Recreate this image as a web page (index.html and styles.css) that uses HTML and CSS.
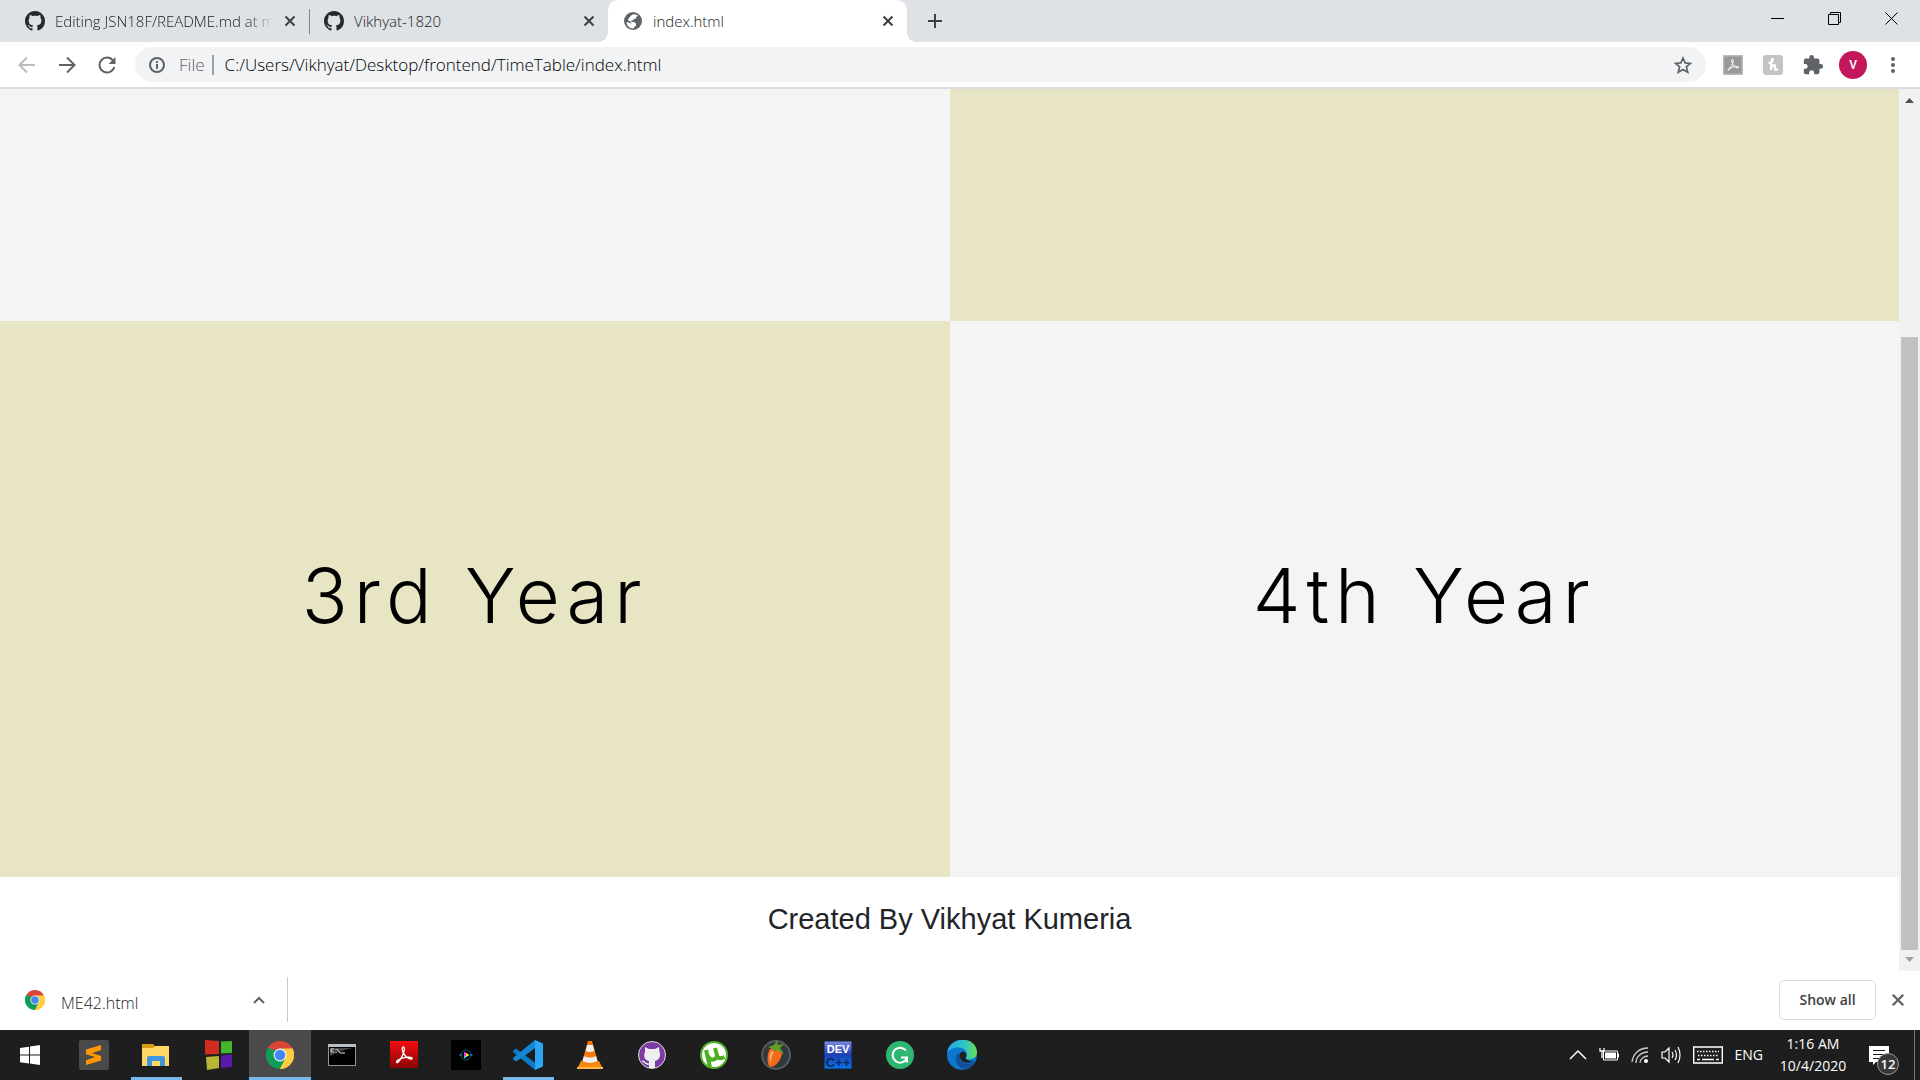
FILE: index.html
```html
<!DOCTYPE html>
<html lang="en">
<head>
<meta charset="utf-8">
<title>index.html</title>
<link rel="stylesheet" href="styles.css">
</head>
<body>
<svg class="defs" aria-hidden="true">
  <symbol id="cross" viewBox="0 0 12 12"><path d="M1.5 1.5l9 9M10.500 1.500l-9 9" fill="none" stroke="currentColor" stroke-width="2"/></symbol>
  <symbol id="octocat" viewBox="0 0 16 16"><path fill="currentColor" d="M8 0C3.580 0 0 3.580 0 8c0 3.540 2.290 6.530 5.470 7.590.4.070.55-.17.55-.38 0-.19-.01-.82-.01-1.490-2.010.37-2.530-.49-2.690-.94-.09-.23-.48-.94-.82-1.130-.28-.15-.68-.52-.01-.53.63-.01 1.080.58 1.230.82.72 1.210 1.870.87 2.330.66.07-.52.28-.87.51-1.070-1.780-.2-3.640-.89-3.640-3.950 0-.87.31-1.590.82-2.150-.08-.2-.36-1.020.08-2.120 0 0 .67-.21 2.200.82.64-.18 1.320-.27 2-.27s1.360.09 2 .27c1.530-1.040 2.200-.82 2.200-.82.44 1.100.16 1.920.08 2.120.51.56.82 1.270.82 2.150 0 3.070-1.870 3.750-3.650 3.950.29.25.54.73.54 1.480 0 1.070-.01 1.930-.01 2.200 0 .21.15.46.55.38A8.010 8.010 0 0 0 16 8c0-4.420-3.580-8-8-8z"/></symbol>
  <symbol id="chrome" viewBox="0 0 48 48">
    <path fill="#db4437" d="M24 24L3.200 12A24 24 0 0 1 44.800 12z"/>
    <path fill="#0f9d58" d="M24 24L24 48A24 24 0 0 1 3.200 12z"/>
    <path fill="#ffcd40" d="M24 24L44.800 12A24 24 0 0 1 24 48z"/>
    <path fill="#db4437" d="M24 13H45.300L44.800 12 24 10z"/>
    <path fill="#0f9d58" d="M14.500 29.500L3.200 12 16 16zM14.500 29.500L24 35 33.500 29.500 24 48z"/>
    <path fill="#ffcd40" d="M24 13H45.300A24 24 0 0 1 24 48L33.500 29.500z"/>
    <circle cx="24" cy="24" r="11" fill="#f1f1f1"/><circle cx="24" cy="24" r="9" fill="#4285f4"/>
  </symbol>
  <symbol id="acrobat" viewBox="0 0 28 28"><path fill="none" stroke="#fff" stroke-width="1.400" d="M12.500 6.500c-1 2 .8 6.500 3.500 9 2.500 2.300 6 3.500 6.200 2 .2-1.600-5-1.700-9-.6-4 1-7 3-6.500 4.400.6 1.400 3.500-1.800 5.400-6 1.700-3.800 2.700-8.300 1.700-9.100-.5-.3-1 0-1.300.3z"/></symbol>
</svg>

<header class="tabs">
  <div class="tab"><svg class="i20 dark"><use href="#octocat"/></svg><span class="tab-title fade">Editing JSN18F/README.md at m</span><button class="tab-close" aria-label="Close tab"><svg class="i12"><use href="#cross"/></svg></button></div>
  <div class="tab divided"><svg class="i20 dark"><use href="#octocat"/></svg><span class="tab-title">Vikhyat-1820</span><button class="tab-close" aria-label="Close tab"><svg class="i12"><use href="#cross"/></svg></button></div>
  <div class="tab active"><svg class="i20" viewBox="0 0 20 20"><circle cx="10" cy="10" r="9" fill="#5f6368"/><path fill="#fff" d="M10 3.500c2.500-.5 4 .5 5 1.500l-1.500.5-.5 2-2 .5-1 1.500H8L8.500 11h2.500l2 1.500v2L10 17.500c-3.500 0-6.500-3-6.500-6.500L7 12l1.500 1-1-2.500L5 9.500C5.500 7 8 4 10 3.500z"/></svg><span class="tab-title">index.html</span><button class="tab-close" aria-label="Close tab"><svg class="i12"><use href="#cross"/></svg></button></div>
  <button class="new-tab" aria-label="New tab"><svg class="i16" viewBox="0 0 16 16"><path d="M8 1v14M1 8h14" stroke="#3c4043" stroke-width="2"/></svg></button>
  <div class="window-controls">
    <button aria-label="Minimize"><svg class="i14" viewBox="0 0 14 14"><path d="M0 6.500h13" stroke="#000"/></svg></button>
    <button aria-label="Restore"><svg class="i14" viewBox="0 0 14 14"><path d="M.5 2.500h10v10H.5zM2.500 2.500v-2h10v10h-2" fill="none" stroke="#000"/></svg></button>
    <button aria-label="Close"><svg class="i14" viewBox="0 0 14 14"><path d="M.5.5l12 12M12.500.5l-12 12" stroke="#000"/></svg></button>
  </div>
</header>

<nav class="toolbar">
  <button class="nav-button faded" aria-label="Back"><svg class="i18" viewBox="0 0 18 18"><path d="M17 9H2M9 1.500L1.500 9 9 16.500" fill="none" stroke="currentColor" stroke-width="2"/></svg></button>
  <button class="nav-button" aria-label="Forward"><svg class="i18" viewBox="0 0 18 18"><path d="M1 9h15M9 1.500L16.500 9 9 16.500" fill="none" stroke="currentColor" stroke-width="2"/></svg></button>
  <button class="nav-button" aria-label="Reload"><svg class="i18" viewBox="0 0 18 18"><path d="M15 4.500A7.500 7.500 0 1 0 16.300 11" fill="none" stroke="currentColor" stroke-width="2"/><path fill="currentColor" d="M17.500 1v7h-7z"/></svg></button>
  <form class="omnibox">
    <svg class="i16" viewBox="0 0 16 16"><circle cx="8" cy="8" r="7" fill="none" stroke="#5f6368" stroke-width="2"/><path d="M8 7v5M8 4v2" stroke="#5f6368" stroke-width="2"/></svg>
    <label class="scheme" for="url">File</label>
    <input id="url" class="url" value="C:/Users/Vikhyat/Desktop/frontend/TimeTable/index.html" spellcheck="false">
    <button type="button" class="star" aria-label="Bookmark this page"><svg class="i18" viewBox="0 0 18 18"><path d="M9 2l2.100 4.900 5.400.5-4.100 3.500 1.300 5.300L9 13.400l-4.700 2.800 1.300-5.300-4.100-3.500 5.400-.5z" fill="none" stroke="#5f6368" stroke-width="1.700"/></svg></button>
  </form>
  <div class="extensions">
    <button aria-label="Acrobat"><svg class="i20" viewBox="0 0 28 28"><path fill="#999" stroke="#bbb" stroke-width="2" d="M1 1h26v26H1z"/><use href="#acrobat"/></svg></button>
    <button aria-label="Honey"><svg class="i20" viewBox="0 0 20 20"><rect width="20" height="20" rx="3" fill="#c4c4c4"/><path d="M5.500 8C8 8 10.500 6 10 4c-1.500-1-2 4-2 11 .5-4 3-6 4-4.500.8 1.500-1 4 .3 4.500.9.300 1.700-.5 2.200-1.500" fill="none" stroke="#fff" stroke-width="2"/></svg></button>
    <button aria-label="Extensions"><svg class="i22" viewBox="0 0 24 24"><path fill="#5f6368" d="M20.500 11H19V7a2 2 0 0 0-2-2h-4V3.500a2.500 2.500 0 0 0-5 0V5H4a2 2 0 0 0-2 2v3.800h1.500a2.700 2.700 0 0 1 0 5.400H2V20c0 1.100.9 2 2 2h3.800v-1.500a2.700 2.700 0 0 1 5.400 0V22H17a2 2 0 0 0 2-2v-4h1.500a2.500 2.500 0 0 0 0-5z"/></svg></button>
    <button aria-label="Profile"><span class="avatar">V</span></button>
    <button aria-label="Menu"><svg class="i18" viewBox="0 0 18 18"><g fill="#5f6368"><circle cx="9" cy="3" r="2"/><circle cx="9" cy="9" r="2"/><circle cx="9" cy="15" r="2"/></g></svg></button>
  </div>
</nav>

<main class="viewport">
  <div class="page">
    <div class="years">
      <section class="year"></section>
      <section class="year khaki"></section>
      <section class="year khaki"><h1>3rd Year</h1></section>
      <section class="year"><h1>4th Year</h1></section>
    </div>
    <footer class="credit">Created By Vikhyat Kumeria</footer>
  </div>
  <div class="scrollbar">
    <svg class="arrow" viewBox="0 0 21 21"><path d="M6 14l4.500-5 4.500 5z" fill="#505050"/></svg>
    <div class="track"><div class="thumb"></div></div>
    <svg class="arrow" viewBox="0 0 21 21"><path d="M6 7l4.500 5L15 7z" fill="#a0a0a0"/></svg>
  </div>
</main>

<aside class="shelf">
  <div class="download"><svg class="i20"><use href="#chrome"/></svg><span class="file">ME42.html</span><button class="options" aria-label="Download options"><svg class="i12" viewBox="0 0 12 12"><path d="M1 9l5-5 5 5" fill="none" stroke="#5f6368" stroke-width="2"/></svg></button></div>
  <button class="show-all">Show all</button>
  <button class="shelf-close" aria-label="Close downloads"><svg class="i14"><use href="#cross"/></svg></button>
</aside>

<footer class="taskbar">
  <button class="app" aria-label="Start"><svg class="i20" viewBox="0 0 20 20"><path fill="#fff" d="M0 3l9-1.300V9.500H0zM10 1.500L20 0v9.500H10zM0 10.500h9v8L0 17.200zM10 10.500h10V20l-10-1.400z"/></svg></button>
  <button class="app" aria-label="Sublime Text"><svg class="i30" viewBox="0 0 30 30"><rect width="30" height="30" rx="2" fill="#4a4a4a"/><path fill="#ff9800" d="M22 5v5l-9 3.200 9 2.800v4.500L7 25v-4.800l9-3.200-9-2.800V9.500z"/></svg></button>
  <button class="app running" aria-label="File Explorer"><svg class="i30" viewBox="0 0 30 30"><path fill="#d99a0b" d="M1 4h11l2 2-1 3H1z"/><path fill="#ffd763" d="M1 8h11l2-2h14v20H1z"/><path fill="#3f97dd" d="M6 26v-8q0-2 2-2h14q2 0 2 2v8h-5v-5h-8v5z"/></svg></button>
  <button class="app" aria-label="Colour blocks"><svg class="i30" viewBox="0 0 30 30"><path fill="#d22b20" d="M2 0l14 1v13L2 14.500z"/><path fill="#43b82d" d="M18 1.500l11-.5v12l-11 .5z"/><path fill="#b8b634" d="M3 17l13-1v12L4 30z"/><path fill="#5a18ad" d="M18 15.500l11-1V27l-11 1z"/></svg></button>
  <button class="app running focused" aria-label="Chrome"><svg class="i28"><use href="#chrome"/></svg></button>
  <button class="app" aria-label="Command Prompt"><svg class="i28" viewBox="0 0 28 28"><path fill="#000" stroke="#8d979d" d="M.5 4.500h27v20H.5z"/><path fill="#b6c1c7" d="M0 3h28v3H0z"/><path fill="#444" d="M2 7h24c-8 1-17 4-24 8z"/><path d="M6 8H3v3h3M8 8v1M8 11v1M9 8l3 4h5" fill="none" stroke="#ddd"/></svg></button>
  <button class="app" aria-label="Acrobat Reader"><svg class="i28" viewBox="0 0 28 28"><defs><linearGradient id="red" x2="0" y2="1"><stop stop-color="#f40d0d"/><stop offset="1" stop-color="#8b0507"/></linearGradient></defs><path fill="url(#red)" d="M0 0h28v27H0z"/><use href="#acrobat"/></svg></button>
  <button class="app" aria-label="Media player"><svg class="i30" viewBox="0 0 30 30"><path d="M0 0h30v30H0z"/><circle cx="15" cy="15" r="5" fill="none" stroke="#0a5877"/><path d="M8.500 15h2M19.500 15h2" stroke="#1793d1" stroke-width="1.500"/><path fill="#f2c" d="M13 11.500l3 2v3l-3 2z"/><path fill="#ffe14a" d="M14.500 12.500l4 2.500-3 2z"/><path fill="#3df" d="M13 18.500v-3l3 1z"/></svg></button>
  <button class="app running" aria-label="Visual Studio Code"><svg class="i30" viewBox="0 0 30 30"><path fill="#0b7dc8" d="M0 11l3-2.500L25 25l-3 5L0 12z"/><path fill="#1488d2" d="M0 19l3 2.500L25 7l-3-7L0 18z"/><path fill="#2aa7f2" d="M22 0l8 3.500v23L22 30z"/><path fill="#1d1d1d" d="M22 8v14l-9-7z"/></svg></button>
  <button class="app" aria-label="VLC"><svg class="i28" viewBox="0 0 28 28"><path fill="#f58a0b" d="M5 20h18l4 8H1z"/><path fill="#ffb84a" d="M1 26h26v2H1z"/><path fill="#f47b0b" d="M12 0h4l6 21q-8 5-16 0z"/><path fill="#eee" d="M11.200 4h5.600l1.600 6q-4.400 2-8.800 0zM8 15q6 3 12 0l1.500 5q-7.500 4-15 0z"/></svg></button>
  <button class="app" aria-label="GitHub Desktop"><svg class="i28" viewBox="0 0 28 28"><circle cx="14" cy="14" r="13.500" fill="#7d3ca5" stroke="#ddd"/><path fill="#eee" d="M7 6l4 2h6l4-2 .5 5c2 5-1 8-4.500 9v7h-6v-7c-4-1-6-4-4-9z"/><path d="M11 23c-4 1-4-3-7-3" fill="none" stroke="#eee" stroke-width="1.500"/></svg></button>
  <button class="app" aria-label="uTorrent"><svg class="i28" viewBox="0 0 28 28"><circle cx="14" cy="14" r="13" fill="#fff" stroke="#4caf27" stroke-width="2"/><path d="M6 9l4 17M8 15c2 6 9 4 9-1l-2-7M16.500 13c1 5 4 5 8 3" fill="none" stroke="#4caf1d" stroke-width="4"/></svg></button>
  <button class="app" aria-label="FL Studio"><svg class="i30" viewBox="0 0 30 30"><circle cx="15" cy="15" r="14" fill="#33383c" stroke="#545c62" stroke-width="2"/><path fill="#f26a1b" d="M9 9c5-2 11-1 12 4 0 5-6 14-11 14S6 12 9 9z"/><path fill="#ffad66" d="M11 11c-3 3-3 8-1 12 0-5 1-8 3-11z"/><path fill="#5f9f28" d="M7 7l6-2 3-5 1 5 6-1-4 4 4 6-7-4-3 2-1-3z"/></svg></button>
  <button class="app" aria-label="Dev-C++"><svg class="i30" viewBox="0 0 30 30"><defs><linearGradient id="dev" x2="0" y2="1"><stop stop-color="#7d8ee0"/><stop offset=".5" stop-color="#1b41b5"/><stop offset="1" stop-color="#0878ee"/></linearGradient></defs><rect x="1" y="1" width="28" height="28" rx="1" fill="url(#dev)" stroke="#172238"/><text x="15" y="13" class="dev-top">DEV</text><text x="15" y="27" class="dev-low">C++</text></svg></button>
  <button class="app" aria-label="Grammarly"><svg class="i28" viewBox="0 0 28 28"><circle cx="14" cy="14" r="14" fill="#2fb673"/><path d="M20 9.500a7.500 7.500 0 1 0 .8 8M15 16.500h6v5" fill="none" stroke="#fff" stroke-width="2"/></svg></button>
  <button class="app" aria-label="Edge"><svg class="i30" viewBox="0 0 30 30"><defs><linearGradient id="wave"><stop stop-color="#28a7e5"/><stop offset=".6" stop-color="#31c4c4"/><stop offset="1" stop-color="#68df50"/></linearGradient></defs><circle cx="15" cy="15" r="15" fill="#0b78d0"/><path fill="url(#wave)" d="M0 13C2-4 29-5 30 12c0 6-5 8-10 7-3-1 0-2 0-5C19 6 5 5 0 13z"/><path fill="#124f9e" d="M12 12c-6 5-3 15 5 17 5 0 9-3 11-7-7 4-17 1-16-10z"/><path fill="#1e1e1e" d="M18 12c-3-2-7 2-5 6 3 6 11 6 17 2v3c-2 1 0-1-1-2-3 1-9 0-10-2-1-1 2-3-1-7z"/></svg></button>
  <div class="tray">
    <svg class="i18" viewBox="0 0 18 18"><path d="M1 13l8-8 8 8" fill="none" stroke="#fff" stroke-width="1.500"/></svg>
    <svg class="i20" viewBox="0 0 20 20"><path d="M4.500 6h14v9h-14z" fill="none" stroke="#fff"/><path d="M6 7.500h11v6H6z" fill="#fff"/><path d="M19.500 8.500v4M1 3v3h4V3M3 6v7" fill="none" stroke="#fff" stroke-width="1.300"/></svg>
    <svg class="i18" viewBox="0 0 18 18"><path d="M1 16C2 8 8 2 17 2M5 17C5 11 10 6 17 6M9 17c0-4 4-7 8-7" fill="none" stroke="#ccc" stroke-width="1.300"/><circle cx="15" cy="15" r="2" fill="#fff"/></svg>
    <svg class="i20" viewBox="0 0 20 20"><path d="M1 7h3l4-4v14l-4-4H1zM11 7q2 3 0 6M14 5q3 5 0 10M17 2q4 8 0 16" fill="none" stroke="#fff" stroke-width="1.200"/></svg>
    <svg class="i30" viewBox="0 0 30 30"><path d="M.7 7h28.600v16H.7z" fill="none" stroke="#fff" stroke-width="1.400"/><path d="M4 11.500h22M5 15.500h21" stroke="#fff" stroke-width="1.500" stroke-dasharray="1.500 1.500"/><path d="M4 19.500h3M9 19.500h12M23 19.500h3" stroke="#fff" stroke-width="1.500"/></svg>
    <span>ENG</span>
    <time class="clock">1:16 AM<br>10/4/2020</time>
    <button class="notices" aria-label="Notifications"><svg class="i20" viewBox="0 0 20 20"><path fill="#fff" d="M0 1h20v16H7l-3 3v-3H0z"/><path d="M4 5.500h12M4 9.500h12M4 13.500h7" stroke="#1d1d1d"/></svg><span class="badge">12</span></button>
  </div>
</footer>
</body>
</html>
```
FILE: styles.css
```css
* { box-sizing: border-box; }
body {
  margin: 0;
  height: 100vh;
  display: flex;
  flex-direction: column;
  overflow: hidden;
  background: #fff;
  color: #3c4043;
  font: 14px/20px "Open Sans", "Noto Sans", sans-serif;
}
button, input { font: inherit; color: inherit; border: 0; padding: 0; background: none; }
button { display: flex; align-items: center; justify-content: center; }
svg { display: block; flex: none; }
.defs { position: absolute; width: 0; height: 0; }
.i12 { width: 12px; height: 12px; }
.i14 { width: 14px; height: 14px; }
.i16 { width: 16px; height: 16px; }
.i18 { width: 18px; height: 18px; }
.i20 { width: 20px; height: 20px; }
.i22 { width: 22px; height: 22px; }
.i28 { width: 28px; height: 28px; }
.i30 { width: 30px; height: 30px; }
.dark { color: #24292e; }

/* Tab strip */
.tabs { display: flex; flex: none; height: 42px; padding-left: 10px; background: #dee1e6; }
.tab { display: flex; align-items: center; gap: 10px; width: 299px; padding: 0 13px 0 15px; position: relative; }
.tab-title { flex: 1; overflow: hidden; white-space: nowrap; font-size: 15px; font-weight: 300; color: #202124; }
.fade { -webkit-mask-image: linear-gradient(to right, #000 88%, transparent); mask-image: linear-gradient(to right, #000 88%, transparent); }
.divided::before { content: ""; position: absolute; left: 0; top: 9px; width: 1px; height: 25px; background: #80868b; }
.active { background: #fff; border-radius: 10px 10px 0 0; }
.active::before, .active::after { content: ""; position: absolute; bottom: 0; width: 10px; height: 10px; }
.active::before { right: 100%; background: radial-gradient(circle at 0 0, #dee1e6 10px, #fff 10px); }
.active::after { left: 100%; background: radial-gradient(circle at 100% 0, #dee1e6 10px, #fff 10px); }
.new-tab { width: 56px; }
.window-controls { display: flex; margin-left: auto; padding-bottom: 5px; }
.window-controls button { width: 57px; }

/* Toolbar */
.toolbar { display: flex; align-items: center; flex: none; height: 47px; padding: 0 7px 0 7px; border-bottom: 2px solid #dadce0; }
.nav-button { width: 40px; height: 35px; color: #5f6368; }
.faded { color: #babcbe; }
.omnibox { display: flex; align-items: center; flex: 1; height: 35px; margin: 0 7px 0 8px; padding: 0 14px; border-radius: 18px; background: #f1f3f4; font-size: 17px; font-weight: 300; }
.scheme { margin-left: 14px; padding-right: 7px; border-right: 2px solid #9aa0a6; color: #5f6368; }
.url { flex: 1; margin-left: 11px; color: #000; outline: 0; }
.extensions { display: flex; }
.extensions button { width: 40px; height: 35px; }
.avatar { width: 28px; height: 28px; border-radius: 50%; background: #c2185b; color: #fff; font: 500 12px/28px Roboto, sans-serif; text-align: center; }

/* Page being viewed */
.viewport { display: flex; flex: 1; min-height: 0; }
.page { display: flex; flex: 1; flex-direction: column; }
.years { display: grid; flex: 1; grid-template-columns: 1fr 1fr; grid-template-rows: 232fr 556fr; }
.year { display: flex; align-items: center; justify-content: center; padding-bottom: 8px; background: #f4f4f4; }
.khaki { background: #e8e5c5; }
.year h1 { margin: 0; color: #000; font: 300 76px/96px Inter, Lato, sans-serif; letter-spacing: 6px; }
.credit { padding: 24px 0 34px; text-align: center; color: #212529; font: 29px/36px "Liberation Sans", Arial, sans-serif; }
.scrollbar { display: flex; flex-direction: column; width: 21px; background: #f1f1f1; }
.arrow { width: 21px; height: 21px; }
.track { display: flex; flex: 1; flex-direction: column; justify-content: flex-end; padding: 0 2px; }
.thumb { height: 73%; background: #c1c1c1; }

/* Download shelf */
.shelf { display: flex; align-items: center; flex: none; height: 59px; padding: 0 15px 2px 0; }
.download { display: flex; align-items: center; width: 288px; height: 45px; padding: 0 22px 0 25px; border-right: 1px solid #c8cacc; }
.file { flex: 1; margin-left: 16px; padding-top: 6px; font-size: 16px; font-weight: 300; color: #202124; }
.show-all { width: 97px; height: 40px; margin-left: auto; border: 1px solid #dadce0; border-radius: 5px; font-weight: 600; font-size: 14px; }
.shelf-close { margin-left: 15px; color: #5f6368; }

/* Taskbar */
.taskbar { display: flex; flex: none; height: 50px; padding-left: 1px; background: #1e1e1e; color: #fff; }
.app { width: 62px; height: 50px; position: relative; }
.app:first-child { padding-right: 4px; }
.running::after { content: ""; position: absolute; left: 6px; right: 5px; bottom: 0; height: 3px; background: #76b9ed; }
.focused { background: #4a4a4a; }
.focused::after { left: 0; right: 0; }
.dev-top { font: bold 11px "Liberation Sans", sans-serif; text-anchor: middle; fill: #fff; }
.dev-low { font: bold 13px "Liberation Sans", sans-serif; text-anchor: middle; fill: #0a2758; }
.tray { display: flex; align-items: center; gap: 12px; margin-left: auto; margin-right: 5px; padding-right: 25px; border-right: 1px solid #777; }
.clock { width: 76px; line-height: 22px; text-align: center; }
.notices { position: relative; margin-left: 6px; }
.badge { position: absolute; left: 8px; top: 8px; width: 22px; height: 22px; border: 1px solid #999; border-radius: 50%; background: #383838; font: 600 13px/20px "Open Sans", sans-serif; text-align: center; }
```
